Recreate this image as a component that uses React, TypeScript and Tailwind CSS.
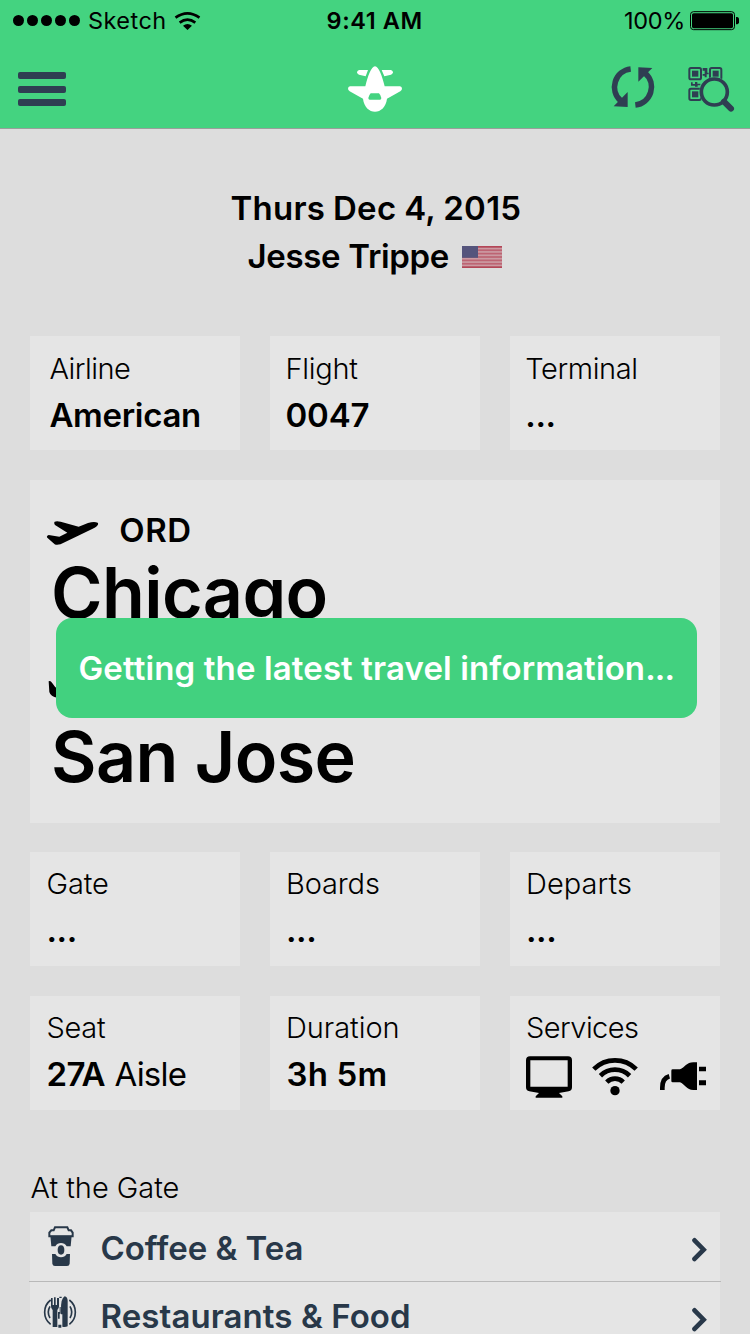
import React from "react";

const NAVY = "#2f3e52";
const SLATE = "#283849";
const GREEN = "#44d380";

const label = "h-[37px] whitespace-nowrap text-[29px] font-light leading-[37px]";
const value = "mt-2 h-10 whitespace-nowrap text-[33px] font-semibold leading-10";

function StatusBar() {
  return (
    <div className="grid h-10 grid-cols-3 text-[23.5px] leading-[41px]">
      <div className="flex items-center pl-[13px]">
        <div className="flex gap-[3px]">
          {[0, 1, 2, 3, 4].map((i) => (
            <span key={i} className="size-[11px] rounded-full bg-black" />
          ))}
        </div>
        <span className="ml-2 tracking-[0.45px]">Sketch</span>
        <svg viewBox="524 30 82 60" className="ml-[7.500px] h-5 w-[27.300px]" fill="none" stroke="#000">
          <path d="M528.500 50 Q564.500 24 600.500 50" strokeWidth="8" />
          <path d="M541 65 Q564.500 47 588 65" strokeWidth="8" />
          <path d="M551 74 Q564.500 64 578 74 L564.500 87Z" fill="#000" stroke="none" />
        </svg>
      </div>
      <div className="pl-[76.500px] font-semibold tracking-[0.600px]">9:41 AM</div>
      <div className="flex items-center justify-end pr-[10px]">
        <span className="mr-[4px] tracking-[-0.300px]">100%</span>
        <svg viewBox="297 30 153 63" className="h-[21px] w-[51px]">
          <rect x="301.500" y="35" width="132" height="54" rx="9" fill="none" stroke="#000" strokeWidth="3" />
          <rect x="306" y="39.500" width="123" height="45" rx="5" />
          <path d="M438 51h4q5 1 5 6v10q0 5-5 6h-4z" />
        </svg>
      </div>
    </div>
  );
}

function NavBar() {
  return (
    <div className="flex h-[88px] items-start justify-between pl-[18px] pr-[14px] pt-[25px]">
      <div className="flex w-[126px] flex-col gap-[6.500px] pt-[7px]">
        <span className="h-[7px] w-12 rounded-[2px] bg-[#2f3e52]" />
        <span className="h-[7px] w-12 rounded-[2px] bg-[#2f3e52]" />
        <span className="h-[7px] w-12 rounded-[2px] bg-[#2f3e52]" />
      </div>
      <svg viewBox="144 197 162 138" className="mr-[4px] mt-[1px] h-[46px] w-[54px]" fill="#fff">
        <path d="M225 198C214 198 203 228 196 258H150Q144 259 144 265Q144 269 149 273L189 295C192 320 208 334 225 334C242 334 258 320 261 295L301 273Q306 269 306 265Q306 259 300 258H254C247 228 236 198 225 198Z" />
        <path d="M204 209H177Q171 211 171 216Q172 221 177 223L197 228Z" />
        <path d="M245 209H273Q279 211 279 216Q278 221 273 223L253 228Z" />
        <path d="M212 279H237Q241 282 244 293Q244 298 240 298H209Q205 298 205 293Q208 282 212 279Z" fill={GREEN} />
      </svg>
      <div className="flex gap-8">
        <svg viewBox="60 195 138 132" className="h-11 w-[46px]" fill="none" stroke={NAVY} strokeWidth="17">
          <path d="M122 207A54.500 54.500 0 0 0 92 302" />
          <path d="M136 315A54.500 54.500 0 0 0 166 220" />
          <path d="M71 319L113 276V321ZM187 204L145 202V245Z" fill={NAVY} stroke="none" />
        </svg>
        <svg viewBox="294 198 144 138" className="mt-[1px] h-[46px] w-12" fill="none" stroke={NAVY}>
          <g strokeWidth="6">
            <rect x="298" y="204" width="35" height="34" rx="5" />
            <rect x="360" y="204" width="34" height="34" rx="5" />
            <rect x="298" y="266" width="35" height="34" rx="5" />
          </g>
          <g fill={NAVY} stroke="none">
            <rect x="306" y="212" width="19" height="18" />
            <rect x="368" y="212" width="18" height="18" />
            <rect x="306" y="274" width="19" height="18" />
            <path d="M338 204h14v14h4v5h-6v9h-6v-5h-6v-5h6v-10h-6zM303 247h5v5h7v-6h7v5h9v5h-8v4h-8v-3h-12z" />
          </g>
          <circle cx="373" cy="276" r="45" fill={GREEN} stroke="none" />
          <path d="M402 305L423 326" strokeWidth="18" strokeLinecap="round" />
          <circle cx="373" cy="276" r="39" strokeWidth="11" />
        </svg>
      </div>
    </div>
  );
}

function Flag() {
  return (
    <svg viewBox="0 0 40 22" className="ml-[13px] mt-[2px] h-[22px] w-10">
      <rect width="40" height="22" fill="#cb9aa2" />
      {[0, 1, 2, 3, 4, 5, 6].map((i) => (
        <rect key={i} y={(i * 44) / 13} width="40" height={22 / 13} fill={i === 0 || i === 6 ? "#b34657" : "#bd6473"} />
      ))}
      <rect width="16" height="11.800" fill="#55547c" />
    </svg>
  );
}

function Card({ className, children }: { className: string; children: React.ReactNode }) {
  return <div className={"h-[114px] w-[210px] bg-[#e5e5e5] " + className}>{children}</div>;
}

function Departing() {
  return (
    <svg viewBox="78 60 159 78" className="h-[26px] w-[53px]">
      <path d="M104 65Q110 62 122 65L176 80L204 69Q222 64 233 68Q239 76 218 86L134 127Q114 138 104 133L82 113Q78 108 86 105L118 110L142 98L105 75Q101 69 104 65Z" />
    </svg>
  );
}

function Arriving() {
  return (
    <svg viewBox="84 538 159 78" className="h-[26px] w-[53px]">
      <path d="M86 542Q91 538 96 546L106 560L132 567L118 538Q120 536 128 541L168 577L218 592Q236 598 232 604Q228 610 208 608L112 591Q92 588 88 574Z" />
    </svg>
  );
}

function Services() {
  return (
    <div className="mt-[10px] flex">
      <svg viewBox="78 197 138 126" className="h-[42px] w-[46px]">
        <path fillRule="evenodd" d="M90 198H204Q216 198 216 210V291Q216 301 206 303L177 308L187 318V322H107V318L117 308L88 303Q78 301 78 291V210Q78 198 90 198ZM91 210V289H203V210Z" />
      </svg>
      <svg viewBox="276 197 138 126" className="ml-5 h-[42px] w-[46px]" fill="none" stroke="#000" strokeWidth="14">
        <path d="M281.400 236.400A90 90 0 0 1 408.600 236.400M301.200 256.200A62 62 0 0 1 388.800 256.200M320.300 275.300A35 35 0 0 1 369.700 275.300" />
        <circle cx="345" cy="301" r="14" fill="#000" stroke="none" />
      </svg>
      <svg viewBox="480 197 138 126" className="ml-[22px] h-[42px] w-[46px]">
        <path d="M518 237H540C554 232 560 216 580 216H591V299H580C560 299 554 281 540 276H518Q514 276 514 272V241Q514 237 518 237ZM597 229H618V243H597ZM597 270H618V285H597Z" />
        <path d="M487 299V292C487 274 494 262 508 258" fill="none" stroke="#000" strokeWidth="14" />
      </svg>
    </div>
  );
}

function Coffee() {
  return (
    <svg viewBox="69 194 108 126" className="h-[42px] w-9" fill={SLATE}>
      <path d="M88 228V217L94 210H101L105 201H142L146 210H153L158 217V228Z" fill="none" stroke={SLATE} strokeWidth="6" />
      <path d="M91 226H155L152 258H140Q134 248 123 248Q112 248 106 258H94Z" />
      <path d="M96 281H106Q112 291 123 291Q134 291 140 281H150L149 310Q148 317 141 317H105Q98 317 97 310Z" />
      <ellipse cx="123" cy="269" rx="10" ry="14" />
    </svg>
  );
}

function Dining() {
  return (
    <svg viewBox="66 404 108 102" className="h-[34px] w-9" fill={SLATE}>
      <path d="M92 419A46 46 0 0 0 92 492M90 438A34 34 0 0 0 90 473M148 419A46 46 0 0 1 148 492M150 438A34 34 0 0 1 150 473" fill="none" stroke={SLATE} strokeWidth="5" />
      <path d="M93 413H98V434H102V411H107V434H111V413H117V438Q117 445 112 449V500H98V449Q93 445 93 438Z" />
      <path d="M123 450Q122 414 134 408Q143 410 143 422V498Q135 502 127 499V462H123Z" />
      <path d="M118 409H125V413H118ZM114 455H119V475H114ZM115 493H124V502H115ZM119 440H122V460H119Z" />
    </svg>
  );
}

function Chevron() {
  return (
    <svg viewBox="273 142 48 76" className="h-[25.300px] w-4" fill="none" stroke={SLATE} strokeWidth="14" strokeLinecap="round">
      <path d="M283.500 152L311 180L283.500 208" />
    </svg>
  );
}

export default function App() {
  return (
    <div className="relative h-[1334px] w-[750px] overflow-hidden bg-[#dddddd] font-['Inter','Liberation_Sans',sans-serif] text-black">
      <header className="h-[129px] border-b border-[#999f9b] bg-[#44d380]">
        <StatusBar />
        <NavBar />
      </header>

      <main className="px-[30px] pt-[55px]">
        <div className="flex flex-col text-[33px] font-semibold leading-[48px]">
          <div className="pl-[200.500px] tracking-[0.250px] [word-spacing:-0.700px]">Thurs Dec 4, 2015</div>
          <div className="flex items-center pl-[217.500px]">
            <span className="tracking-[-0.320px]">Jesse Trippe</span>
            <Flag />
          </div>
        </div>

        <div className="mt-14 flex justify-between">
          <Card className="pl-[19.400px] pt-[14px]">
            <div className={label + " tracking-[-0.500px]"}>Airline</div>
            <div className={value + " tracking-[-0.300px]"}>American</div>
          </Card>
          <Card className="pl-[15.500px] pt-[14px]">
            <div className={label + " tracking-[-0.270px]"}>Flight</div>
            <div className={value + " tracking-[-0.170px]"}>0047</div>
          </Card>
          <Card className="pl-[15.300px] pt-[14px]">
            <div className={label + " tracking-[-0.390px]"}>Terminal</div>
            <div className={value + " tracking-[-0.400px]"}>...</div>
          </Card>
        </div>

        <section className="mt-[30px] h-[343px] bg-[#e5e5e5] pl-4 pt-[30px]">
          <div className="flex h-10 items-center">
            <div className="mt-[6px]">
              <Departing />
            </div>
            <span className="ml-[20.300px] text-[33px] font-semibold leading-10 tracking-[0.500px]">ORD</span>
          </div>
          <div className="ml-[5px] h-[84px] text-[70px] font-semibold leading-[85px] tracking-[-0.600px]">Chicago</div>
          <div className="mt-[41px] flex h-10 items-start pl-[2px] pt-[5px]">
            <Arriving />
          </div>
          <div className="ml-[5px] h-[84px] text-[70px] font-semibold leading-[84px] tracking-[-0.620px]">San Jose</div>
        </section>

        <div className="mt-[29px] flex justify-between">
          <Card className="pl-[16.500px] pt-[13px]">
            <div className={label + " tracking-[-0.140px]"}>Gate</div>
            <div className={value + " tracking-[-0.400px]"}>...</div>
          </Card>
          <Card className="pl-4 pt-[13px]">
            <div className={label + " tracking-[-0.150px]"}>Boards</div>
            <div className={value + " tracking-[-0.400px]"}>...</div>
          </Card>
          <Card className="pl-4 pt-[13px]">
            <div className={label + " tracking-[0.050px]"}>Departs</div>
            <div className={value + " tracking-[-0.400px]"}>...</div>
          </Card>
        </div>

        <div className="mt-[30px] flex justify-between">
          <Card className="pl-[16.500px] pt-[13px]">
            <div className={label + " tracking-[-0.300px]"}>Seat</div>
            <div className={value + " flex"}>
              <span className="w-[68px] tracking-[-0.500px]">27A</span>
              <span className="font-normal tracking-[-0.800px]">Aisle</span>
            </div>
          </Card>
          <Card className="pl-4 pt-[13px]">
            <div className={label + " tracking-[-0.050px]"}>Duration</div>
            <div className={value + " pl-[0.500px] tracking-[0.200px]"}>3h 5m</div>
          </Card>
          <Card className="pl-4 pt-[13px]">
            <div className={label + " tracking-[-0.560px]"}>Services</div>
            <Services />
          </Card>
        </div>

        <h2 className="mt-[59px] h-[43px] pl-[0.500px] text-[29px] font-light leading-[37px] tracking-[-0.050px]">At the Gate</h2>
        <div className="-mx-px">
          <div className="flex h-[70px] justify-between border-b border-[#b9b9b9]">
            <div className="mx-px flex grow justify-between bg-[#e5e5e5] pl-[13px] pr-[13px]">
              <div className="flex items-start">
                <div className="pt-[13px]">
                  <Coffee />
                </div>
                <span className="ml-[21.500px] whitespace-nowrap pt-4 text-[33px] font-semibold leading-10 tracking-[-0.050px] text-[#283849]">
                  Coffee &amp; Tea
                </span>
              </div>
              <div className="pt-[25px]">
                <Chevron />
              </div>
            </div>
          </div>
          <div className="mx-px flex h-[70px] justify-between bg-[#e5e5e5] pl-[12px] pr-[13px]">
            <div className="flex items-start">
              <div className="pt-[13px]">
                <Dining />
              </div>
              <span className="ml-[22.500px] whitespace-nowrap pt-[18px] text-[33px] font-semibold leading-8 tracking-[0.080px] text-[#283849]">
                Restaurants &amp; Food
              </span>
            </div>
            <div className="pt-[25px]">
              <Chevron />
            </div>
          </div>
        </div>
      </main>

      <div className="absolute left-[56px] top-[618px] flex h-[100px] w-[641px] items-center rounded-2xl bg-[#42d17f] pl-[22.500px]">
        <span className="whitespace-nowrap text-[33px] font-semibold leading-10 tracking-[0.120px] text-white">
          Getting the latest travel information<span className="tracking-[-0.900px]">...</span>
        </span>
      </div>
    </div>
  );
}
